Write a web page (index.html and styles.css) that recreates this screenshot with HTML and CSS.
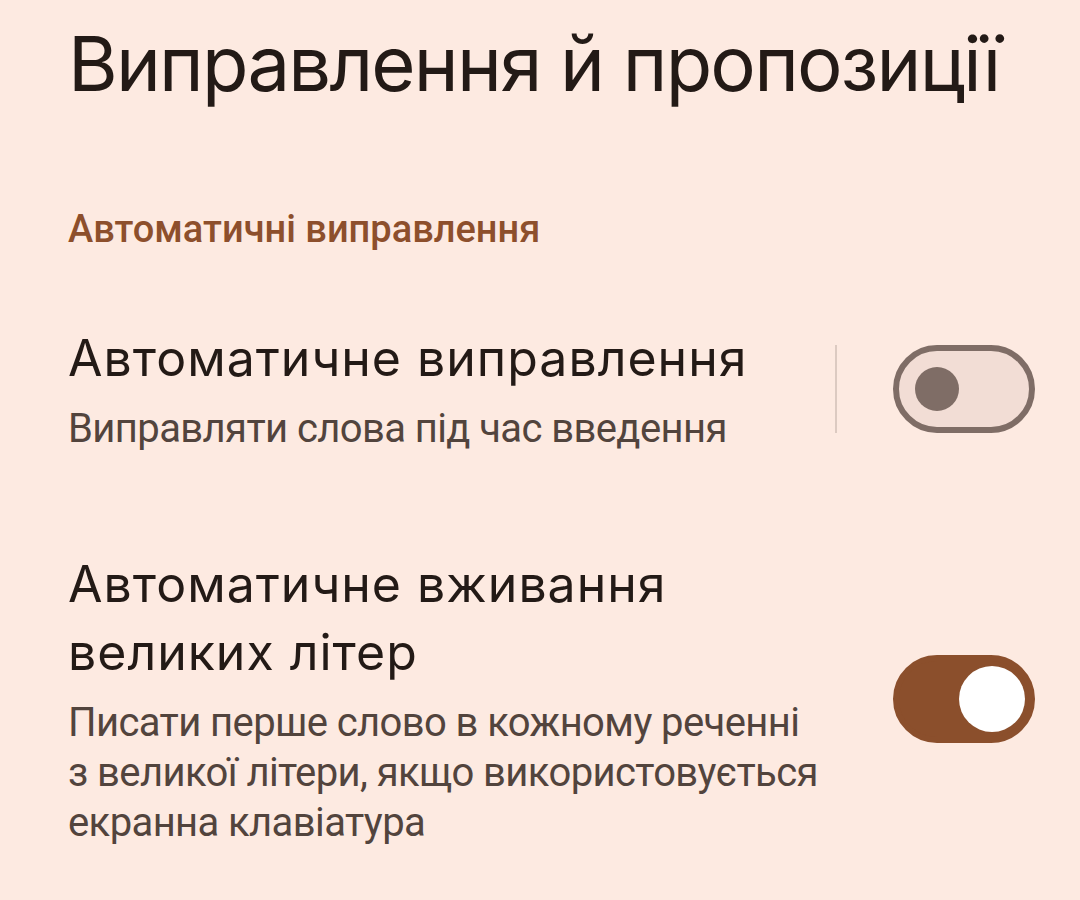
FILE: index.html
```html
<!DOCTYPE html>
<html lang="uk">
<head>
    <meta charset="UTF-8">
    <meta name="viewport" content="width=device-width, initial-scale=1.0">
    <title>Виправлення й пропозиції</title>
    <link rel="stylesheet" href="styles.css">
</head>
<body>
    <div class="settings">
        <h1 class="page-title">Виправлення й пропозиції</h1>

        <div class="section-label">Автоматичні виправлення</div>

        <div class="pref-row first">
            <div class="pref-text">
                <div class="pref-title">Автоматичне виправлення</div>
                <div class="pref-summary">Виправляти слова під час введення</div>
            </div>
            <div class="divider"></div>
            <div class="switch"><span class="thumb"></span></div>
        </div>

        <div class="pref-row">
            <div class="pref-text">
                <div class="pref-title">Автоматичне вживання<br>великих літер</div>
                <div class="pref-summary">Писати перше слово в кожному реченні<br>з великої літери, якщо використовується<br>екранна клавіатура</div>
            </div>
            <div class="switch on"><span class="thumb"></span></div>
        </div>
    </div>
</body>
</html>
```

FILE: styles.css
```css
body {
    margin: 0;
    padding: 0;
    background: #fdeae1;
    font-family: Roboto, "Noto Sans", sans-serif;
    color: #231a16;
}

.settings {
    padding: 0 45px 0 68px;
}

.page-title {
    margin: 0;
    padding-top: 17px;
    font-family: Inter, "Noto Sans", sans-serif;
    font-weight: 400;
    font-size: 76px;
    line-height: 92px;
    letter-spacing: -1.8px;
    color: #231a16;
}

.section-label {
    margin-top: 98px;
    font-size: 38px;
    font-weight: 500;
    line-height: 44px;
    color: #8d4f2c;
}

.pref-row {
    display: flex;
    align-items: center;
}

.pref-row.first {
    margin-top: 73px;
}

.pref-row + .pref-row {
    margin-top: 96px;
}

.pref-text {
    flex: 1;
}

.pref-title {
    font-family: Inter, "Noto Sans", sans-serif;
    font-size: 50px;
    line-height: 68px;
    letter-spacing: 1px;
    color: #231a16;
}

.pref-summary {
    margin-top: 12px;
    font-size: 40px;
    line-height: 50px;
    letter-spacing: -0.6px;
    color: #52443d;
}

.divider {
    width: 2px;
    height: 88px;
    background: #dccac1;
    margin-right: 56px;
}

.switch {
    position: relative;
    box-sizing: border-box;
    width: 142px;
    height: 88px;
    border-radius: 44px;
    border: 6px solid #7f6d66;
    background: #f2ddd5;
}

.switch .thumb {
    position: absolute;
    left: 16px;
    top: 16px;
    width: 44px;
    height: 44px;
    border-radius: 50%;
    background: #7f6d66;
}

.switch.on {
    border-color: #8b4f2c;
    background: #8b4f2c;
}

.switch.on .thumb {
    left: 60px;
    top: 5px;
    width: 66px;
    height: 66px;
    background: #ffffff;
}
```
